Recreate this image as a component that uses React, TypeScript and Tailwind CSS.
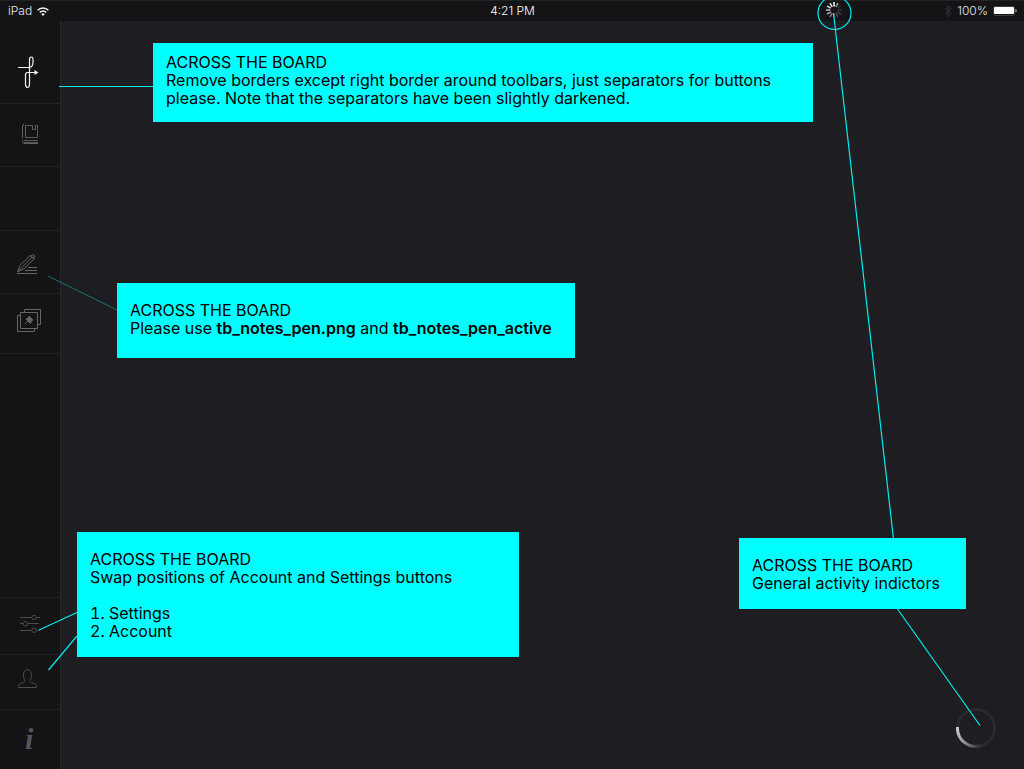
import type { ReactNode } from "react";

function LogoIcon() {
  return (
    <svg width="22" height="34" viewBox="0 0 22 34" fill="none" stroke="#f2f2f2" strokeWidth="1.2" aria-hidden="true">
      <path d="M0 11.500H11.500C14 11 15 8.500 15 6V4C15 2 14.600 1 13.200 1S11.500 2 11.500 3.500V27.500C11.500 30 11 31.500 9.500 31.500S7.500 30 7.500 28V19C7.500 17.500 8.200 16.500 9.500 16.500H17" />
      <path d="M16.500 14L20.500 16.500L16.500 19Z" fill="#f2f2f2" stroke="none" />
    </svg>
  );
}

function BookIcon() {
  return (
    <svg width="18" height="20" viewBox="0 0 18 20" fill="none" stroke="#5c5c61" aria-hidden="true">
      <path d="M1.500 0V1.500H.5V14.500" />
      <path d="M10.500 1.500H3.500V13.500H15.500V1.500H13.500V5.500H10.500Z" />
      <path d="M16 16.500H2C.8 16.500.5 17.200.5 18C.5 19 1 19.500 2 19.500H16M2 18.500H16" />
    </svg>
  );
}

function PenIcon() {
  return (
    <svg width="21" height="21" viewBox="0 0 21 21" fill="none" stroke="#66666b" aria-hidden="true">
      <path d="M0 19.500H20M8 16.500H20M11 13.500H20" />
      <path d="M.8 17.800L2.500 11.800L13.200 1.500L17.300 4.800L7 14.800Z" strokeLinejoin="round" />
      <path d="M14 2L15.800.6L18 2L16.800 4.200M1 17.500L15 3.200" strokeLinejoin="round" />
      <path d="M14.200 2.200L16.800 4.500" />
    </svg>
  );
}

function PinnedIcon() {
  return (
    <svg width="24" height="23" viewBox="0 0 24 23" fill="none" stroke="#66666b" aria-hidden="true">
      <path d="M7.500 3.500V.5H23.500V15.500H20.500" />
      <path d="M3.500 3.500H20.500V19.500H3.500Z" />
      <path d="M3.500 6.500H.5V22.500H17.500V19.500" />
      <path d="M12 7L16 11L15 11.500L14 11.500L14 14L13.500 14.500L9 10.200L9.500 9.500L11.500 9.500Z" fill="#66666b" />
      <path d="M8 15L11.500 11.500" />
    </svg>
  );
}

function SlidersIcon() {
  return (
    <svg width="20" height="18" viewBox="0 0 20 18" fill="none" stroke="#4c4c51" aria-hidden="true">
      <path d="M0 2.500H11.500M16.500 2.500H20M0 8.500H3M8 8.500H19M0 15.500H11.500M16.500 15.500H20" />
      <circle cx="14" cy="2.500" r="2.200" />
      <circle cx="5.500" cy="8.800" r="2.200" />
      <circle cx="14" cy="15.300" r="2.200" />
    </svg>
  );
}

function PersonIcon() {
  return (
    <svg width="19" height="20" viewBox="0 0 19 20" fill="none" stroke="#4c4c51" aria-hidden="true">
      <path d="M.5 18.500V17C.8 15.500 2 14.500 4 14C6 13.500 7 13 7 11.500C5.800 10 5.500 8 5.500 5.500C5.500 2.500 7 .8 9.500.8S13.500 2.500 13.500 5.500C13.500 8 13.200 10 12 11.500C12 13 13 13.500 15 14C17 14.500 18.200 15.500 18.500 17V18.500Z" />
    </svg>
  );
}

function WifiIcon() {
  return (
    <svg width="12" height="9" viewBox="0 0 12 9" fill="none" stroke="#f4f4f4" strokeWidth="1.500" aria-hidden="true">
      <path d="M.6 3.300C3.600.1 8.400.1 11.400 3.300M2.800 5.400C4.600 3.600 7.400 3.600 9.200 5.400" />
      <path d="M4.200 6.900Q6 5.500 7.800 6.900L6 8.900Z" fill="#f4f4f4" stroke="none" />
    </svg>
  );
}

function BluetoothIcon() {
  return (
    <svg width="8" height="12" viewBox="0 0 8 12" fill="none" stroke="#343438" aria-hidden="true">
      <path d="M1 3L7 8.500L4 11.500V.5L7 3.500L1 9" />
    </svg>
  );
}

function BatteryIcon() {
  return (
    <svg width="24" height="10" viewBox="0 0 24 10" aria-hidden="true">
      <rect x=".5" y=".5" width="21" height="9" rx="1.500" fill="#141416" stroke="#3c3c3e" />
      <rect x="1" y="1" width="20" height="7" rx="1" fill="#fff" />
      <path d="M22.500 3C24 3.500 24 6 22.500 6.500Z" fill="#d8d8d8" />
    </svg>
  );
}

const spokes = [
  "#ffffff", "#a0a0a2", "#303034", "#38383c", "#424246", "#505054",
  "#66666a", "#88888b", "#a8a8aa", "#c0c0c2", "#d4d4d5", "#ededed",
];

function ActivitySpinner() {
  return (
    <svg width="16" height="16" viewBox="0 0 16 16" strokeWidth="1.500" aria-hidden="true">
      {spokes.map((color, i) => (
        <path key={color} d="M8 0V4.400" stroke={color} transform={`rotate(${i * 30} 8 8)`} />
      ))}
    </svg>
  );
}

function ProgressRing() {
  return (
    <svg width="40" height="40" viewBox="0 0 40 40" fill="none" strokeWidth="3" aria-hidden="true">
      <defs>
        <linearGradient id="ring" x1="2" y1="20" x2="25" y2="38" gradientUnits="userSpaceOnUse">
          <stop stopColor="#c8c8c8" />
          <stop offset=".5" stopColor="#929294" />
          <stop offset="1" stopColor="#2b2b2f" />
        </linearGradient>
      </defs>
      <circle cx="20" cy="20" r="18.500" stroke="#2b2b2f" />
      <path d="M1.500 19A18.500 18.500 0 0 0 25 37.800" stroke="url(#ring)" />
    </svg>
  );
}

function ToolButton({ label, className, children }: { label: string; className: string; children: ReactNode }) {
  return (
    <button type="button" aria-label={label} className={`flex w-full shrink-0 justify-start border-[#232326] ${className}`}>
      {children}
    </button>
  );
}

function Callout({ className, children }: { className: string; children: ReactNode }) {
  return (
    <section className={`absolute bg-[#00ffff] pl-[13px] whitespace-nowrap text-black ${className}`}>
      <h2>ACROSS THE BOARD</h2>
      {children}
    </section>
  );
}

function Connectors() {
  return (
    <svg className="pointer-events-none absolute top-0 left-0" width="1024" height="769" viewBox="0 0 1024 769" fill="none" stroke="#00eeee" strokeWidth="1.200" aria-hidden="true">
      <path d="M59 86.500H153" strokeWidth="1" />
      <path d="M48 276L117 310" stroke="#117879" strokeWidth="1" />
      <path d="M39 630L77 612.500M48.500 670L77 636" />
      <path d="M833.500 13L893.500 539M897.500 609L980 725.500" />
      <circle cx="834.500" cy="13" r="16.500" />
    </svg>
  );
}

export default function App() {
  return (
    <div className="relative flex min-h-screen flex-col overflow-hidden bg-[#1e1d21] font-['Inter',sans-serif] text-[16px] leading-[18px]">
      <header className="flex h-[21px] items-center justify-between border-t border-[#222225] bg-[#141416] pr-[7px] pl-2 text-[12px] leading-5 font-light text-[#e8e8e8]">
        <div className="flex flex-1 items-center gap-[5px]">
          <span>iPad</span>
          <WifiIcon />
        </div>
        <time className="text-white">4:21 PM</time>
        <div className="flex flex-1 items-center justify-end gap-[5px]">
          <BluetoothIcon />
          <span>100%</span>
          <BatteryIcon />
        </div>
      </header>

      <div className="flex flex-1">
        <nav aria-label="Toolbar" className="flex w-[61px] shrink-0 flex-col border-r border-[#29292d] bg-[#141416]">
          <ToolButton label="Home" className="h-[83px] border-b pt-[35px] pl-[18px]"><LogoIcon /></ToolButton>
          <ToolButton label="Library" className="h-[63px] border-b pt-5 pl-[22px]"><BookIcon /></ToolButton>
          <div className="h-16 shrink-0 border-b border-[#232326]" />
          <ToolButton label="Notes" className="h-[63px] border-b pt-[23px] pl-[17px]"><PenIcon /></ToolButton>
          <ToolButton label="Pinned" className="h-[60px] border-b pt-[15px] pl-[17px]"><PinnedIcon /></ToolButton>
          <div className="mt-auto">
            <ToolButton label="Settings" className="h-[57px] border-t pt-[17px] pl-5"><SlidersIcon /></ToolButton>
            <ToolButton label="Account" className="h-[55px] border-t pt-[14px] pl-[18px]"><PersonIcon /></ToolButton>
            <ToolButton label="Information" className="h-[60px] border-t pt-[14px] pl-[25px]">
              <span className="font-['Liberation_Serif',serif] text-[30px] leading-[30px] font-bold text-[#56565c] italic">i</span>
            </ToolButton>
          </div>
        </nav>
        <main className="flex flex-1 items-end justify-end pr-7 pb-[21px]">
          <ProgressRing />
        </main>
      </div>

      <div className="absolute top-[2px] left-[826px]"><ActivitySpinner /></div>
      <Connectors />

      <Callout className="top-[43px] left-[153px] h-[79px] w-[660px] pt-[10px]">
        <p>Remove borders except right border around toolbars, just separators for buttons<br />please. Note that the separators have been slightly darkened.</p>
      </Callout>
      <Callout className="top-[283px] left-[117px] h-[75px] w-[458px] pt-[18px]">
        <p>Please use <strong className="font-semibold">tb_notes_pen.png</strong> and <strong className="font-semibold">tb_notes_pen_active</strong></p>
      </Callout>
      <Callout className="top-[532px] left-[77px] h-[125px] w-[442px] pt-[18px]">
        <p>Swap positions of Account and Settings buttons</p>
        <ol className="mt-[18px] list-inside list-decimal">
          <li>Settings</li>
          <li>Account</li>
        </ol>
      </Callout>
      <Callout className="top-[538px] left-[739px] h-[71px] w-[227px] pt-[18px]">
        <p>General activity indictors</p>
      </Callout>
    </div>
  );
}
